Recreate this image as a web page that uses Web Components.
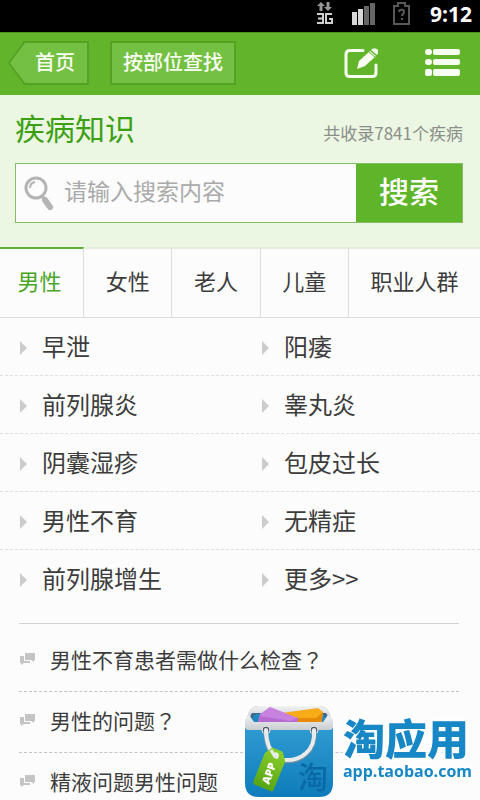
<!DOCTYPE html>
<html lang="zh-CN">
<head>
<meta charset="utf-8">
<meta name="viewport" content="width=device-width, initial-scale=1">
<title>疾病知识</title>
<style>
  body {
    margin: 0;
    min-height: 100vh;
    background: #fcfcfc;
    color: #3c3c3c;
    font-family: "Noto Sans CJK SC", sans-serif;
  }

  /* centred full-width question mark */
  .mark { font-family: "Noto Sans CJK TC", sans-serif; }
</style>
</head>
<body>
<status-bar time="9:12"></status-bar>
<app-header>
  <nav-button back>首页</nav-button>
  <nav-button>按部位查找</nav-button>
</app-header>
<search-panel placeholder="请输入搜索内容">
  <span slot="title">疾病知识</span>
  <span slot="count">共收录7841个疾病</span>
</search-panel>
<tab-bar>
  <tab-item active>男性</tab-item>
  <tab-item>女性</tab-item>
  <tab-item>老人</tab-item>
  <tab-item>儿童</tab-item>
  <tab-item>职业人群</tab-item>
</tab-bar>
<disease-row><disease-link>早泄</disease-link><disease-link>阳痿</disease-link></disease-row>
<disease-row><disease-link>前列腺炎</disease-link><disease-link>睾丸炎</disease-link></disease-row>
<disease-row><disease-link>阴囊湿疹</disease-link><disease-link>包皮过长</disease-link></disease-row>
<disease-row><disease-link>男性不育</disease-link><disease-link>无精症</disease-link></disease-row>
<disease-row><disease-link>前列腺增生</disease-link><disease-link>更多&gt;&gt;</disease-link></disease-row>
<question-list>
  <question-item>男性不育患者需做什么检查<span class="mark" lang="zh-TW">？</span></question-item>
  <question-item>男性的问题<span class="mark" lang="zh-TW">？</span></question-item>
  <question-item>精液问题男性问题</question-item>
</question-list>
<store-badge></store-badge>

<script>
class BaseElement extends HTMLElement {
  constructor() {
    super();
    const template = document.createElement("template");
    template.innerHTML = this.constructor.markup;
    this._shadowRoot = this.attachShadow({ mode: "open" });
    this._shadowRoot.appendChild(template.content.cloneNode(true));
  }
}

class StatusBar extends BaseElement {
  static markup = `
    <style>
      :host {
        display: flex;
        justify-content: flex-end;
        align-items: center;
        height: 32px;
        padding: 0 8px;
        background: #000;
        color: #fff;
        font: bold 21px/28px "Open Sans", sans-serif;
        box-sizing: border-box;
      }
      svg { display: block; }
      time { margin-left: 8px; padding-bottom: 4px; }
    </style>
    <svg width="106" height="32" viewBox="0 0 106 32" aria-hidden="true">
      <path fill="#999" d="M5 2l4 4H6.500v5h-3V6H1zM12 11l4-4h-2.500V2h-3v5H8z"/>
      <path fill="none" stroke="#d0d0d0" stroke-width="2" d="M1 14h6v9H1M2 18.500h5M16 14h-6v9h6v-4h-3"/>
      <path fill="#d8d8d8" d="M36 12h5v13h-5zM42 9h5v16h-5z"/>
      <path fill="#666" d="M48 6h5v19h-5zM54 3h5v22h-5z"/>
      <path fill="none" stroke="#585858" stroke-width="2" d="M78 6h4V3h7v3h4v18H78z"/>
      <path fill="none" stroke="#585858" stroke-width="2" d="M83 12c0-3 5-3 5 0 0 2-2 2-2 4M86 18v2"/>
    </svg>
    <time></time>
  `;

  connectedCallback() {
    this._shadowRoot.querySelector("time").textContent = this.getAttribute("time");
  }
}

class AppHeader extends BaseElement {
  static markup = `
    <style>
      :host {
        display: flex;
        align-items: center;
        height: 63px;
        padding: 0 20px 2px 8px;
        background: #62b42a;
        border-top: 1px solid #4b9220;
        box-sizing: border-box;
      }
      nav { display: flex; gap: 21px; flex: 1; }
      .actions { display: flex; gap: 46px; }
      .actions button { display: block; padding: 0; border: 0; background: none; cursor: pointer; }
      svg { display: block; }
    </style>
    <nav><slot></slot></nav>
    <div class="actions">
      <button aria-label="编辑">
        <svg width="35" height="32" viewBox="0 0 35 32">
          <path fill="none" stroke="#f6fff0" stroke-width="3" stroke-linejoin="round" stroke-linecap="round" d="M19 3.500H6q-4 0-4 4v18q0 4 4 4h22q4 0 4-4V18"/>
          <path fill="#f6fff0" d="M13 22l2-8L26 4l6 5-11 10z"/>
          <path fill="#f6fff0" d="M27 3l2-1.500h3L34 3v3l-1 2z"/>
          <path stroke="#62b42a" stroke-width="1" d="M25 5l6 5"/>
        </svg>
      </button>
      <button aria-label="菜单">
        <svg width="35" height="28" viewBox="0 0 35 28" fill="#f6fff0">
          <rect width="7" height="6" rx="3"/><rect x="8" width="27" height="6" rx="2"/>
          <rect y="10" width="7" height="6" rx="3"/><rect x="8" y="10" width="27" height="6" rx="2"/>
          <rect y="20" width="7" height="7" rx="2"/><rect x="8" y="20" width="27" height="7" rx="2"/>
        </svg>
      </button>
    </div>
  `;
}

class NavButton extends BaseElement {
  static markup = `
    <style>
      :host { display: block; }
      button {
        display: block;
        height: 44px;
        padding: 0 11px 2px;
        border: 2px solid #55a126;
        background: #74c043;
        color: #f8fff2;
        font: 500 20px/38px "Noto Sans CJK SC", sans-serif;
        cursor: pointer;
      }
      /* arrow shape: dark outline with the lighter fill drawn inside it */
      :host([back]) button {
        position: relative;
        isolation: isolate;
        padding: 0 14px 2px 27px;
        border-width: 2px 0;
        background: #55a126;
        clip-path: polygon(16px 0, 100% 0, 100% 100%, 16px 100%, 0 50%);
      }
      :host([back]) button::before {
        content: "";
        position: absolute;
        z-index: -1;
        inset: 0 2px;
        background: #74c043;
        clip-path: polygon(15px 0, 100% 0, 100% 100%, 15px 100%, 0 50%);
      }
    </style>
    <button><slot></slot></button>
  `;
}

class SearchPanel extends BaseElement {
  static markup = `
    <style>
      :host {
        display: block;
        padding: 10px 17px 24px 15px;
        background: #ebf6e3;
      }
      header { display: flex; justify-content: space-between; align-items: center; }
      h1 { margin: 0; color: #3ba012; font-size: 30px; line-height: 40px; font-weight: 400; }
      p { margin: 0; padding-top: 12px; color: #8b8f8a; font-size: 17px; line-height: 32px; }
      form {
        display: flex;
        height: 60px;
        margin-top: 14px;
        border: 1px solid #86bd69;
        box-sizing: border-box;
        background: #fcfcfc;
      }
      label { display: flex; align-items: center; padding: 0 10px 0 8px; }
      input {
        flex: 1;
        min-width: 0;
        padding: 0 0 6px;
        border: 0;
        outline: 0;
        background: none;
        color: #3c3c3c;
        font: 23px/32px "Noto Sans CJK SC", sans-serif;
      }
      input::placeholder { color: #aaa; opacity: 1; }
      form button {
        width: 106px;
        padding: 0 0 6px;
        border: 0;
        background: #5fb52a;
        color: #fff;
        font: 500 30px/40px "Noto Sans CJK SC", sans-serif;
        cursor: pointer;
      }
    </style>
    <header>
      <h1><slot name="title"></slot></h1>
      <p><slot name="count"></slot></p>
    </header>
    <form>
      <label for="keyword" aria-label="搜索内容">
        <svg width="30" height="36" viewBox="0 0 30 36" fill="none" stroke="#b4b4b4">
          <circle cx="12" cy="13" r="10" stroke-width="3"/>
          <path stroke-width="2" d="M6 13q0-5 5-6"/>
          <path stroke-width="3" d="M18 21l3 4"/>
          <path stroke-width="6" stroke-linecap="round" d="M21 25l5 7"/>
        </svg>
      </label>
      <input id="keyword" type="text">
      <button type="button">搜索</button>
    </form>
  `;

  connectedCallback() {
    this._shadowRoot.querySelector("input").placeholder = this.getAttribute("placeholder");
  }
}

class TabBar extends BaseElement {
  static markup = `
    <style>
      :host { display: flex; border-bottom: 1px solid #dcdcdc; }
    </style>
    <slot></slot>
  `;
}

class TabItem extends BaseElement {
  static markup = `
    <style>
      :host {
        display: block;
        flex: auto;
        border-right: 1px solid #dedede;
        border-top: 2px solid #e6ebdc;
      }
      :host(:first-child) { margin-left: -4px; }
      :host(:last-child) { border-right: 0; }
      :host([active]) { border-top-color: #5fae35; color: #4aa51f; }
      button {
        display: block;
        width: 100%;
        padding: 15px 21px 21px;
        border: 0;
        background: none;
        color: inherit;
        font: 22px/32px "Noto Sans CJK SC", sans-serif;
        white-space: nowrap;
        cursor: pointer;
      }
    </style>
    <button><slot></slot></button>
  `;
}

class DiseaseRow extends BaseElement {
  static markup = `
    <style>
      :host {
        display: grid;
        grid-template-columns: 1fr 1fr;
        column-gap: 4px;
        border-bottom: 1px dashed #dfdfdf;
      }
      :host(:nth-last-of-type(1)) { border-color: transparent; }
    </style>
    <slot></slot>
  `;
}

class DiseaseLink extends BaseElement {
  static markup = `
    <style>
      :host { display: block; }
      a {
        display: flex;
        align-items: center;
        gap: 15px;
        padding: 10px 0 11px 19px;
        color: inherit;
        font-size: 24px;
        line-height: 36px;
        text-decoration: none;
      }
      svg { margin-top: 4px; }
    </style>
    <a href="#">
      <svg width="8" height="14" viewBox="0 0 8 14" aria-hidden="true"><path fill="#ccc" d="M1 0l7 7-7 7z"/></svg>
      <slot></slot>
    </a>
  `;
}

class QuestionList extends BaseElement {
  static markup = `
    <style>
      :host {
        display: block;
        margin: 15px 21px 0 19px;
        padding-top: 7px;
        border-top: 1px solid #d2d2d2;
      }
    </style>
    <slot></slot>
  `;
}

class QuestionItem extends BaseElement {
  static markup = `
    <style>
      :host { display: block; border-bottom: 1px dashed #c4c4c4; }
      :host(:last-child) { border: 0; }
      a {
        display: flex;
        align-items: center;
        gap: 15px;
        padding: 12px 0 16px;
        color: inherit;
        font-size: 21px;
        line-height: 32px;
        text-decoration: none;
      }
      :host(:last-child) a { padding-bottom: 0; }
    </style>
    <a href="#">
      <svg width="16" height="14" viewBox="0 0 16 14" fill="#c4c4c4" aria-hidden="true">
        <path d="M6 1h10v7h-1v2l-3-2H6zM1 4h4v5h6v2H5l-3 2v-2H1z"/>
      </svg>
      <span><slot></slot></span>
    </a>
  `;
}

class StoreBadge extends BaseElement {
  static markup = `
    <style>
      :host {
        position: fixed;
        right: 8px;
        bottom: 2px;
        display: flex;
        align-items: center;
        gap: 9px;
        color: #1787c5;
      }
      svg { display: block; }
      .name { font: 900 42px/44px "Noto Sans CJK SC", sans-serif; }
      .host { font: bold 16px/20px "Open Sans", sans-serif; }
      .words {
        display: grid;
        gap: 2px;
        padding-bottom: 6px;
        text-shadow: 0 0 3px #fff, 0 0 5px #fff, 0 0 7px #fff, 0 0 9px #fff;
      }
    </style>
    <svg width="90" height="94" viewBox="0 0 90 94">
      <defs>
        <linearGradient id="bag" x2="0" y2="1"><stop stop-color="#2f9bd2"/><stop offset="1" stop-color="#0e7cba"/></linearGradient>
        <linearGradient id="rim" x2="0" y2="1"><stop stop-color="#f2f2f2"/><stop offset="1" stop-color="#c9cdd0"/></linearGradient>
        <linearGradient id="tag" x2="0" y2="1"><stop stop-color="#8bcf2b"/><stop offset="1" stop-color="#57a414"/></linearGradient>
      </defs>
      <rect x="0" y="1" width="89" height="92" rx="14" fill="#fff"/>
      <path fill="#8e979d" d="M3 15Q5 2 15 2h60q10 0 12 13v10H3z"/>
      <path fill="#3c6c8c" d="M7 9h76v16H7z"/>
      <path fill="url(#rim)" d="M3 16Q4 2 15 2h60q11 0 12 14l-5-7H8z"/>
      <path fill="#2286bd" d="M5 17l7-7h67l6 7v9H5z"/>
      <path fill="#f8ab18" d="M38 9l36-5 5 4-2 15H38z"/>
      <path fill="#e68b08" d="M38 14l34 0 7-6-2 15H38z"/>
      <path fill="#c782df" d="M16 10l10-7 28 11-1 8H13z"/>
      <path fill="#b66bd1" d="M16 12l30 5 8-3-1 8H13z"/>
      <path fill="url(#bag)" d="M1 23h88v56q0 14-14 14H15Q1 93 1 79z"/>
      <path fill="url(#rim)" d="M1 15l4-4 5 7h69l5-7 5 4v8q0 3-4 3H5q-4 0-4-3z"/>
      <text x="54" y="84" fill="#0968a6" font-family="Noto Sans CJK SC" font-size="30" font-weight="500">淘</text>
      <circle cx="22" cy="26" r="4" fill="#4e5d67" stroke="#eee"/>
      <circle cx="70" cy="26" r="4" fill="#4e5d67" stroke="#eee"/>
      <path fill="none" stroke="#718f9f" stroke-width="5" stroke-linecap="round" d="M22 27c0 12 4 22 11 28M70 27c2 21-14 31-29 30"/>
      <path fill="none" stroke="#e8ebed" stroke-width="4" stroke-linecap="round" d="M22 26c0 12 4 22 11 28M70 26c2 21-14 31-29 30"/>
      <g transform="rotate(22 26 63)">
        <path fill="url(#tag)" d="M16 52l5-8h11l6 8v31q0 2-2 2H18q-2 0-2-2z"/>
        <circle cx="27" cy="50" r="3" fill="#e8f5da"/>
      </g>
      <path fill="none" stroke="#e8ebed" stroke-width="3" d="M27 46q3 6 7 8"/>
      <text transform="translate(25 81) rotate(-70)" fill="#fff" font-family="Open Sans" font-size="11" font-weight="800">APP</text>
    </svg>
    <div class="words">
      <div class="name">淘应用</div>
      <div class="host">app.taobao.com</div>
    </div>
  `;
}

customElements.define("status-bar", StatusBar);
customElements.define("app-header", AppHeader);
customElements.define("nav-button", NavButton);
customElements.define("search-panel", SearchPanel);
customElements.define("tab-bar", TabBar);
customElements.define("tab-item", TabItem);
customElements.define("disease-row", DiseaseRow);
customElements.define("disease-link", DiseaseLink);
customElements.define("question-list", QuestionList);
customElements.define("question-item", QuestionItem);
customElements.define("store-badge", StoreBadge);
</script>
</body>
</html>
